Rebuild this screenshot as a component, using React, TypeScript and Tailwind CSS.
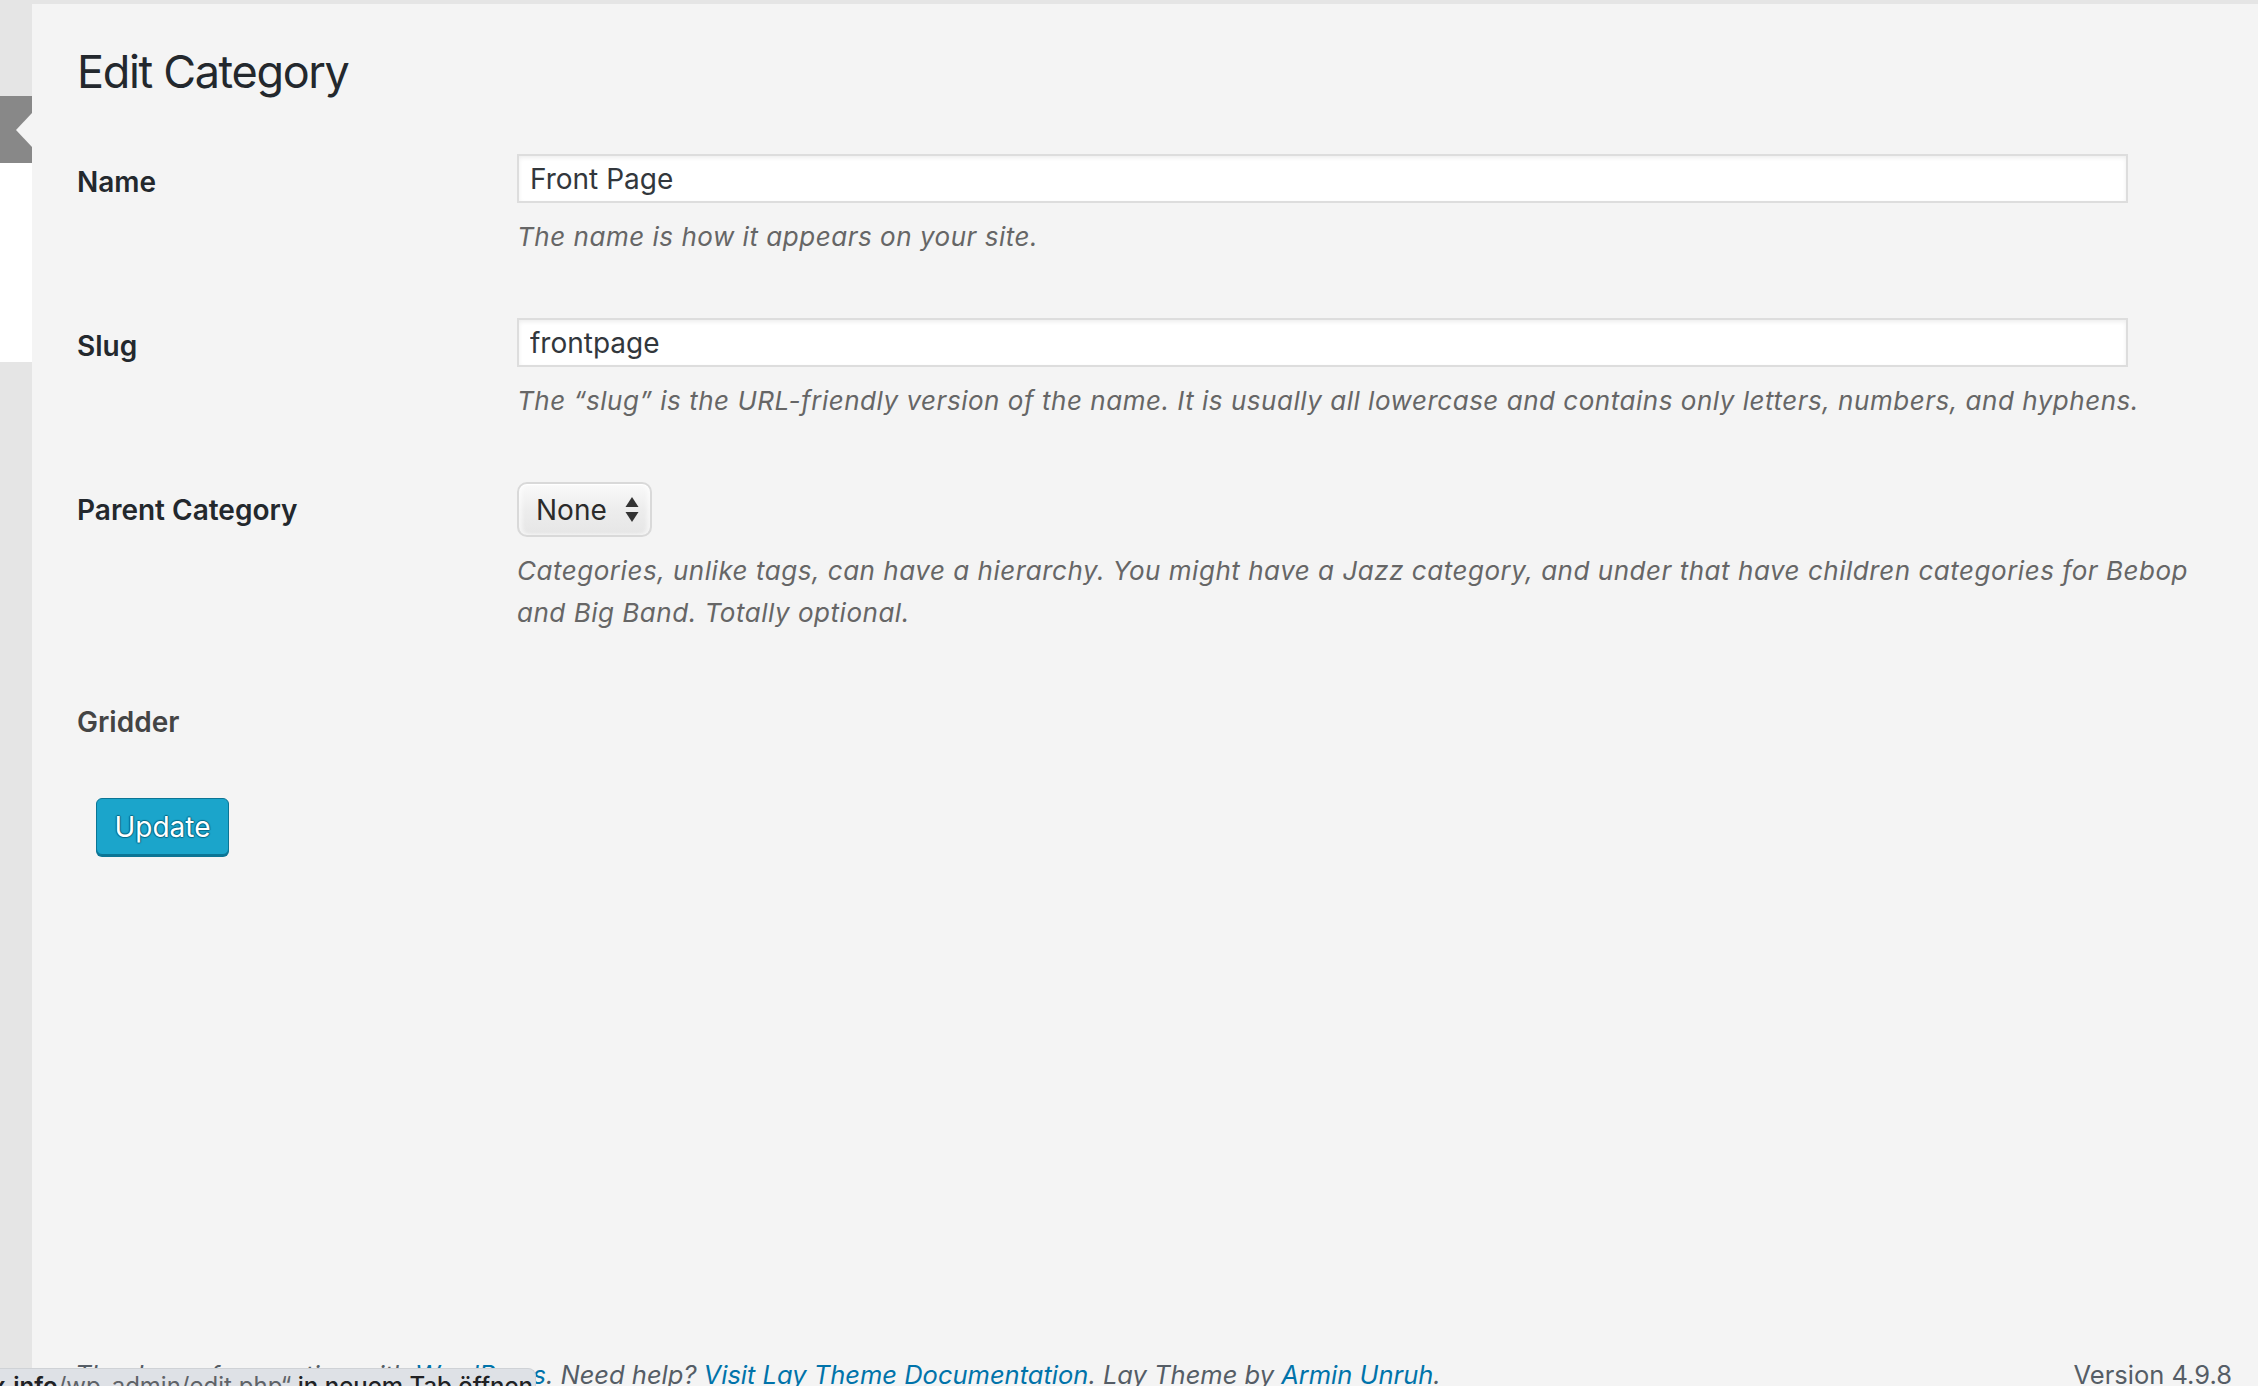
import React from 'react';

type RowProps = {
  label: string;
  children?: React.ReactNode;
};

const Row = ({ label, children }: RowProps) => (
  <div className="grid grid-cols-[440px_1fr]">
    <div className="pt-[38px] text-[28px] leading-[40px] font-semibold text-[#23282d]">
      {label}
    </div>
    <div className="py-[30px]">{children}</div>
  </div>
);

const Description = ({ children }: { children: React.ReactNode }) => (
  <p className="mt-[13px] text-[26px] leading-[42px] tracking-[0.02em] italic text-[#666]">
    {children}
  </p>
);

const TextField = ({ value }: { value: string }) => (
  <input
    type="text"
    defaultValue={value}
    className="block h-[49px] w-[95%] border-2 border-[#dddddd] bg-white px-[11px] text-[28px] text-[#32373c] shadow-[inset_0_2px_4px_rgba(0,0,0,0.07)] outline-none"
  />
);

const SelectBox = () => (
  <div className="flex h-[55px] w-[135px] items-center justify-between rounded-[10px] border-2 border-[#d9d9d9] bg-gradient-to-b from-[#fafafa] via-[#ededed] to-[#e6e6e6] pl-[17px] pr-[11px] shadow-[inset_0_1px_0_#ffffff,inset_3px_0_4px_rgba(255,255,255,0.6),inset_-3px_0_4px_rgba(255,255,255,0.6)]">
    <span className="text-[28px] leading-none text-[#2b2b2b]">None</span>
    <svg width="14" height="26" viewBox="0 0 14 26" className="text-[#333]">
      <path d="M7 0 L13.5 10 H0.5 Z" fill="currentColor" />
      <path d="M0.5 15 H13.5 L7 25 Z" fill="currentColor" />
    </svg>
  </div>
);

export default function App() {
  return (
    <div className="relative flex h-[1386px] w-full overflow-hidden bg-[#e5e5e5] pt-[4px] font-['Inter',sans-serif]">
      {/* admin menu edge */}
      <div className="flex w-[32px] shrink-0 flex-col">
        <div className="h-[92px]" />
        <div className="relative h-[67px] bg-[#888888]">
          <div className="absolute top-[17px] right-0 h-0 w-0 border-y-[17px] border-r-[16px] border-y-transparent border-r-[#f4f4f4]" />
        </div>
        <div className="h-[199px] bg-white" />
      </div>

      <main className="flex min-w-0 flex-1 flex-col bg-[#f4f4f4] px-[45px]">
        <h1 className="mt-[38px] text-[45px] leading-[60px] font-normal tracking-[-0.03em] text-[#23282d]">
          Edit Category
        </h1>

        <div className="mt-[22px]">
          <Row label="Name">
            <TextField value="Front Page" />
            <Description>The name is how it appears on your site.</Description>
          </Row>
          <Row label="Slug">
            <TextField value="frontpage" />
            <Description>
              The “slug” is the URL-friendly version of the name. It is usually
              all lowercase and contains only letters, numbers, and hyphens.
            </Description>
          </Row>
          <Row label="Parent Category">
            <SelectBox />
            <Description>
              Categories, unlike tags, can have a hierarchy. You might have a
              Jazz category, and under that have children categories for Bebop
              and Big Band. Totally optional.
            </Description>
          </Row>
          <div className="pt-[38px] text-[28px] leading-[40px] font-semibold text-[#444]">
            Gridder
          </div>
        </div>

        <div className="mt-[56px] pl-[19px]">
          <button
            type="button"
            className="h-[57px] w-[133px] rounded-[6px] border border-[#0b7595] bg-[#1ba5cb] text-[28px] text-white shadow-[0_2px_0_#0b7595] [text-shadow:0_-1px_1px_#066a87,1px_0_1px_#066a87,0_1px_1px_#066a87,-1px_0_1px_#066a87]"
          >
            Update
          </button>
        </div>

        <footer className="mt-auto -mb-[10px] flex items-center justify-between text-[25.5px] leading-[42px] text-[#555d66]">
          <p className="-ml-[2px] italic">
            Thank you for creating with{' '}
            <a className="text-[#0073aa]">WordPress</a>. Need help?{' '}
            <a className="text-[#0073aa]">Visit Lay Theme Documentation</a>.
            Lay Theme by <a className="text-[#0073aa]">Armin Unruh</a>.
          </p>
          <p className="-mr-[19px]">Version 4.9.8</p>
        </footer>
      </main>

      {/* browser status bubble */}
      <div className="absolute bottom-0 left-0 h-[18px] w-[536px] overflow-hidden rounded-tr-[8px] border-t border-r border-[#cfd2d6] bg-[#dee1e6]">
        <div className="-ml-[8px] pt-[5px] text-[24px] leading-[24px] whitespace-nowrap text-[#202124]">
          <span className="font-semibold">x.info</span>
          <span className="text-[#5f6368]">/wp-admin/edit.php“</span>
          <span className="font-medium"> in neuem Tab öffnen</span>
        </div>
      </div>
    </div>
  );
}
